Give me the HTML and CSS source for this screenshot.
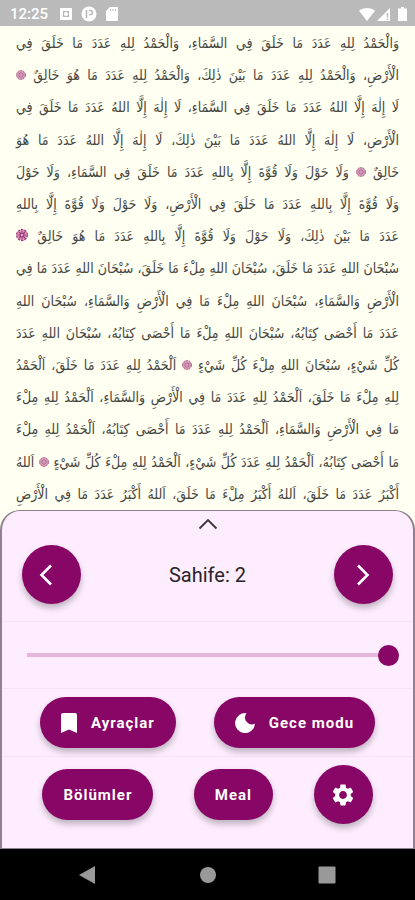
FILE: index.html
```html
<!DOCTYPE html>
<html lang="tr">
  <head>
    <meta charset="UTF-8" />
    <meta name="viewport" content="width=device-width, initial-scale=1" />
    <title>Sahife 2</title>
    <link rel="stylesheet" href="styles.css">
  </head>
  <body>
    <!-- Rosette used between the verses -->
    <svg class="sprite" aria-hidden="true">
      <symbol id="rosette" viewBox="0 0 20 20">
        <circle cx="10" cy="10" r="9" fill="#d9a0bd" stroke="currentColor" stroke-width="2" stroke-dasharray="4 1.65" />
        <path d="M10 3v14M3 10h14M5 5l10 10M15 5L5 15" stroke="currentColor" stroke-width="1.8" />
        <circle cx="10" cy="10" r="1.6" fill="#f6dfe9" />
      </symbol>
    </svg>

    <header class="status-bar">
      <div class="status-left">
        <span class="clock">12:25</span>
        <svg width="12" height="12" viewBox="0 0 12 12">
          <rect width="12" height="12" rx="1" fill="#fff" />
          <rect x="3" y="3" width="6" height="6" fill="#bababa" />
          <circle cx="6" cy="6" r="2" fill="#fff" />
        </svg>
        <svg width="16" height="16" viewBox="0 0 16 16">
          <circle cx="8" cy="8" r="7.5" fill="#fff" />
          <path d="M5.500 4v8M8 4.500h1.500a1.800 1.800 0 0 1 0 4H8" fill="none" stroke="#bababa" stroke-width="1.600" />
        </svg>
        <svg width="12" height="14" viewBox="0 0 12 14">
          <path fill="#fff" d="M4 0h7a1 1 0 0 1 1 1v12a1 1 0 0 1-1 1H1a1 1 0 0 1-1-1V4z" />
          <path d="M4.500 2v2M7 2v2M9.500 2v2" stroke="#bababa" />
        </svg>
      </div>
      <div class="status-right">
        <svg width="16" height="13" viewBox="0 0 16 13">
          <path fill="#fff" d="M8 13L0 2.800C4.500-.9 11.500-.9 16 2.800z" />
        </svg>
        <svg width="14" height="13" viewBox="0 0 14 13">
          <path fill="#fff" d="M13 0v13H0z" />
          <path d="M10.500 5v4.500M10.500 10.500v1.500" stroke="#bababa" stroke-width="1.400" />
        </svg>
        <svg class="battery" width="9" height="14" viewBox="0 0 9 14">
          <path fill="#fff" d="M3 0h3v1.500h3V14H0V1.500h3z" />
        </svg>
      </div>
    </header>

    <main class="page" lang="ar" dir="rtl">
      <p>وَالْحَمْدُ لِلهِ عَدَدَ مَا خَلَقَ فِي السَّمَاءِ، وَالْحَمْدُ لِلهِ عَدَدَ مَا خَلَقَ فِي</p>
      <p>الْأَرْضِ، وَالْحَمْدُ لِلهِ عَدَدَ مَا بَيْنَ ذٰلِكَ، وَالْحَمْدُ لِلهِ عَدَدَ مَا هُوَ خَالِقٌ <svg class="rosette"><use href="#rosette" /></svg></p>
      <p>لَا إِلٰهَ إِلَّا اللهُ عَدَدَ مَا خَلَقَ فِي السَّمَاءِ، لَا إِلٰهَ إِلَّا اللهُ عَدَدَ مَا خَلَقَ فِي</p>
      <p>الْأَرْضِ، لَا إِلٰهَ إِلَّا اللهُ عَدَدَ مَا بَيْنَ ذٰلِكَ، لَا إِلٰهَ إِلَّا اللهُ عَدَدَ مَا هُوَ</p>
      <p>خَالِقٌ <svg class="rosette"><use href="#rosette" /></svg> وَلَا حَوْلَ وَلَا قُوَّةَ إِلَّا بِاللهِ عَدَدَ مَا خَلَقَ فِي السَّمَاءِ، وَلَا حَوْلَ</p>
      <p>وَلَا قُوَّةَ إِلَّا بِاللهِ عَدَدَ مَا خَلَقَ فِي الْأَرْضِ، وَلَا حَوْلَ وَلَا قُوَّةَ إِلَّا بِاللهِ</p>
      <p>عَدَدَ مَا بَيْنَ ذٰلِكَ، وَلَا حَوْلَ وَلَا قُوَّةَ إِلَّا بِاللهِ عَدَدَ مَا هُوَ خَالِقٌ <svg class="rosette rosette-end"><use href="#rosette" /></svg></p>
      <p>سُبْحَانَ اللهِ عَدَدَ مَا خَلَقَ، سُبْحَانَ اللهِ مِلْءَ مَا خَلَقَ، سُبْحَانَ اللهِ عَدَدَ مَا فِي</p>
      <p>الْأَرْضِ وَالسَّمَاءِ، سُبْحَانَ اللهِ مِلْءَ مَا فِي الْأَرْضِ وَالسَّمَاءِ، سُبْحَانَ اللهِ</p>
      <p>عَدَدَ مَا أَحْصَى كِتَابُهُ، سُبْحَانَ اللهِ مِلْءَ مَا أَحْصَى كِتَابُهُ، سُبْحَانَ اللهِ عَدَدَ</p>
      <p>كُلِّ شَيْءٍ، سُبْحَانَ اللهِ مِلْءَ كُلِّ شَيْءٍ <svg class="rosette"><use href="#rosette" /></svg> اَلْحَمْدُ لِلهِ عَدَدَ مَا خَلَقَ، اَلْحَمْدُ</p>
      <p>لِلهِ مِلْءَ مَا خَلَقَ، اَلْحَمْدُ لِلهِ عَدَدَ مَا فِي الْأَرْضِ وَالسَّمَاءِ، اَلْحَمْدُ لِلهِ مِلْءَ</p>
      <p>مَا فِي الْأَرْضِ وَالسَّمَاءِ، اَلْحَمْدُ لِلهِ عَدَدَ مَا أَحْصَى كِتَابُهُ، اَلْحَمْدُ لِلهِ مِلْءَ</p>
      <p>مَا أَحْصَى كِتَابُهُ، اَلْحَمْدُ لِلهِ عَدَدَ كُلِّ شَيْءٍ، اَلْحَمْدُ لِلهِ مِلْءَ كُلِّ شَيْءٍ <svg class="rosette"><use href="#rosette" /></svg> اَللهُ</p>
      <p>أَكْبَرُ عَدَدَ مَا خَلَقَ، اَللهُ أَكْبَرُ مِلْءَ مَا خَلَقَ، اَللهُ أَكْبَرُ عَدَدَ مَا فِي الْأَرْضِ</p>
    </main>

    <section class="panel">
      <button class="handle" aria-label="Paneli aç">
        <svg width="20" height="12" viewBox="0 0 20 12">
          <path d="M1.500 10.500L10 2l8.500 8.500" fill="none" stroke="#3c353b" stroke-width="1.800" />
        </svg>
      </button>

      <div class="row pager">
        <button class="btn round" aria-label="Önceki sahife">
          <svg class="prev" width="14" height="22" viewBox="0 0 14 22">
            <path d="M12 1.500L2.500 11l9.500 9.500" fill="none" stroke="#fff" stroke-width="2.600" />
          </svg>
        </button>
        <span class="page-label">Sahife: 2</span>
        <button class="btn round" aria-label="Sonraki sahife">
          <svg width="14" height="22" viewBox="0 0 14 22">
            <path d="M2 1.500l9.500 9.500L2 20.500" fill="none" stroke="#fff" stroke-width="2.600" />
          </svg>
        </button>
      </div>

      <div class="row slider-row">
        <input class="slider" type="range" min="1" max="2" value="2" aria-label="Sahife" />
      </div>

      <div class="row actions">
        <button class="btn pill with-icon">
          <svg width="16" height="20" viewBox="0 0 16 20">
            <path fill="#fff" d="M2 0h12a2 2 0 0 1 2 2v18l-8-3.500L0 20V2a2 2 0 0 1 2-2z" />
          </svg>
          Ayraçlar
        </button>
        <button class="btn pill with-icon">
          <svg width="20" height="20" viewBox="0 0 20 20">
            <path fill="#fff" d="M11.500.2A10 10 0 1 0 20 10.800 7 7 0 0 1 11.500.2z" />
          </svg>
          Gece modu
        </button>
      </div>

      <div class="row actions last">
        <button class="btn pill">Bölümler</button>
        <button class="btn pill">Meal</button>
        <button class="btn round" aria-label="Ayarlar">
          <svg width="26" height="26" viewBox="0 0 24 24">
            <path fill="#fff" d="M19.140 12.940c.04-.3.060-.61.060-.94 0-.32-.02-.64-.07-.94l2.030-1.580c.18-.14.230-.41.120-.61l-1.920-3.320c-.12-.22-.37-.29-.59-.22l-2.390.96c-.5-.38-1.030-.7-1.620-.94l-.36-2.540c-.04-.24-.24-.41-.48-.41h-3.840c-.24 0-.43.170-.47.410l-.36 2.540c-.59.240-1.130.570-1.620.940l-2.390-.96c-.22-.08-.47 0-.59.220L2.740 8.870c-.12.210-.08.470.120.610l2.030 1.580c-.05.300-.09.630-.09.940s.02.640.070.940l-2.030 1.580c-.18.140-.23.410-.12.610l1.920 3.320c.12.220.370.290.590.220l2.390-.96c.5.380 1.030.7 1.620.940l.36 2.540c.05.240.240.410.480.410h3.840c.24 0 .44-.17.470-.41l.36-2.540c.59-.24 1.130-.56 1.620-.94l2.390.96c.22.080.470 0 .59-.22l1.920-3.320c.12-.22.070-.47-.12-.61l-2.010-1.580zM12 15.600c-1.980 0-3.600-1.620-3.600-3.600s1.620-3.600 3.600-3.600 3.600 1.620 3.600 3.600-1.620 3.600-3.600 3.600z" />
          </svg>
        </button>
      </div>
    </section>

    <nav class="nav-bar">
      <button aria-label="Geri">
        <svg width="18" height="18" viewBox="0 0 18 18"><path fill="#999" d="M16 0v18L0 9z" /></svg>
      </button>
      <button aria-label="Ana ekran">
        <svg width="18" height="18" viewBox="0 0 18 18"><circle cx="9" cy="9" r="8" fill="#999" /></svg>
      </button>
      <button aria-label="Son uygulamalar">
        <svg width="18" height="18" viewBox="0 0 18 18"><rect width="17" height="17" x=".5" y=".5" rx="1" fill="#999" /></svg>
      </button>
    </nav>
  </body>
</html>
```
FILE: styles.css
```css
/* Base */
* {
  box-sizing: border-box;
}
body {
  margin: 0;
  min-height: 100vh;
  display: flex;
  flex-direction: column;
  font-family: Roboto, sans-serif;
  background-color: #fffff2;
}
button {
  border: none;
  background: none;
  padding: 0;
  font-family: inherit;
  cursor: pointer;
}
svg {
  display: block;
}
.sprite {
  display: none;
}

/* Status bar */
.status-bar {
  display: flex;
  justify-content: space-between;
  align-items: center;
  height: 26px;
  padding: 2px 8px 0 10px;
  background-color: #bababa;
  color: white;
}
.status-left,
.status-right {
  display: flex;
  align-items: center;
}
.status-left {
  gap: 9px;
}
.status-right {
  gap: 2px;
}
.clock {
  font-size: 15px;
  font-weight: 500;
  margin-right: 3px;
}
.battery {
  margin-left: 5px;
}

/* Text page */
.page {
  flex: 1;
  display: flex;
  flex-direction: column;
  padding: 1px 16px 0;
  color: #45453f;
  font-family: "DejaVu Sans Condensed", "DejaVu Sans", sans-serif;
  font-size: 14px;
}
.page p {
  flex: 1;
  margin: 0;
  line-height: 32px;
  white-space: nowrap;
  text-align: justify;
  text-align-last: justify;
}
.rosette {
  display: inline-block;
  width: 10px;
  height: 10px;
  color: #b0688f;
}
.rosette-end {
  width: 12px;
  height: 12px;
  color: #9a2f74;
}

/* Bottom panel */
.panel {
  background-color: #fdedfe;
  border: 2px solid #8f8290;
  border-top-width: 1px;
  border-bottom-width: 1px;
  border-radius: 20px 20px 0 0;
}
.handle {
  display: block;
  margin: 0 auto;
  padding: 7px 20px 0;
}
.row {
  display: flex;
  align-items: center;
  border-bottom: 1px solid #f5e4f5;
}
.pager {
  justify-content: space-between;
  height: 92px;
  padding: 0 20px 2px;
}
.page-label {
  font-size: 20px;
  color: #29232a;
}
.slider-row {
  height: 67px;
  padding: 0 14px 0 25px;
}
.actions {
  justify-content: space-evenly;
  height: 68px;
}
.last {
  height: 91px;
  padding-bottom: 16px;
  border-bottom: none;
}

/* Buttons */
.btn {
  display: flex;
  align-items: center;
  justify-content: center;
  background-color: #880665;
  color: white;
  box-shadow: 0 4px 6px rgba(0, 0, 0, 0.25);
}
.round {
  width: 59px;
  height: 59px;
  border-radius: 50%;
}
.prev {
  margin-right: 12px;
}
.pill {
  height: 51px;
  padding: 0 21px;
  border-radius: 26px;
  font-size: 15px;
  font-weight: 700;
  letter-spacing: 1px;
}
.with-icon {
  gap: 14px;
}

/* Slider */
.slider {
  appearance: none;
  width: 100%;
  height: 22px;
  margin: 0;
  background: linear-gradient(#e5b5dc, #e5b5dc) center / 100% 4px no-repeat;
}
.slider::-webkit-slider-thumb {
  appearance: none;
  width: 21px;
  height: 21px;
  border-radius: 50%;
  background-color: #880665;
}

/* Navigation bar */
.nav-bar {
  display: flex;
  justify-content: space-between;
  align-items: center;
  height: 51px;
  padding: 0 79px;
  background-color: black;
}
```
